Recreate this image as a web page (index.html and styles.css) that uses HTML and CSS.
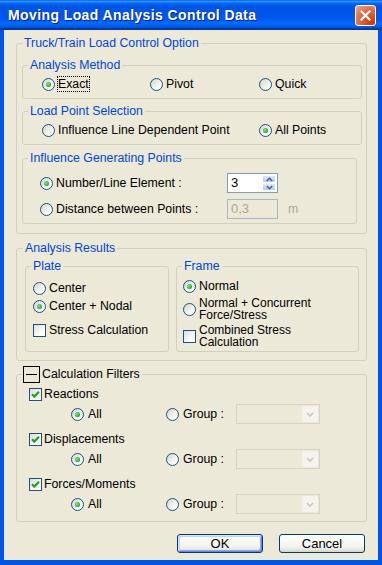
FILE: index.html
```html
<!DOCTYPE html>
<html lang="en">
<head>
  <meta charset="UTF-8" />
  <meta name="viewport" content="width=device-width, initial-scale=1.0"/>
  <title>Moving Load Analysis Control Data</title>
  <link rel="stylesheet" href="styles.css">
</head>
<body>

<div class="window">
  <div class="titlebar">
    <span class="title">Moving Load Analysis Control Data</span>
    <span class="close">
      <svg width="11" height="11" viewBox="0 0 11 11"><path d="M1.5 1.5 L9.5 9.5 M9.5 1.5 L1.5 9.5" stroke="#fff" stroke-width="2.2" stroke-linecap="square"/></svg>
    </span>
  </div>

  <div class="client">
    <fieldset class="group outer truck">
      <legend>Truck/Train Load Control Option</legend>

      <fieldset class="group inner method">
        <legend>Analysis Method</legend>
        <div class="row cols3">
          <div class="opt"><span class="radio on"></span><span class="focus">Exact</span></div>
          <div class="opt"><span class="radio"></span>Pivot</div>
          <div class="opt"><span class="radio"></span>Quick</div>
        </div>
      </fieldset>

      <fieldset class="group inner points">
        <legend>Load Point Selection</legend>
        <div class="row cols2">
          <div class="opt"><span class="radio"></span>Influence Line Dependent Point</div>
          <div class="opt"><span class="radio on"></span>All Points</div>
        </div>
      </fieldset>

      <fieldset class="group inner influence">
        <legend>Influence Generating Points</legend>
        <div class="field-row">
          <div class="opt"><span class="radio on"></span>Number/Line Element :</div>
          <div class="spin">
            <span class="spin-value">3</span>
            <span class="spin-btns">
              <span class="spin-btn"><svg width="7" height="5" viewBox="0 0 7 5"><path d="M0.8 4 L3.5 1.3 L6.2 4" fill="none" stroke="#4D6185" stroke-width="1.6"/></svg></span>
              <span class="spin-btn"><svg width="7" height="5" viewBox="0 0 7 5"><path d="M0.8 1 L3.5 3.7 L6.2 1" fill="none" stroke="#4D6185" stroke-width="1.6"/></svg></span>
            </span>
          </div>
        </div>
        <div class="field-row">
          <div class="opt"><span class="radio"></span>Distance between Points :</div>
          <div class="edit disabled">0,3</div>
          <span class="unit">m</span>
        </div>
      </fieldset>
    </fieldset>

    <fieldset class="group outer results">
      <legend>Analysis Results</legend>
      <div class="pair">
        <fieldset class="group sub plate">
          <legend>Plate</legend>
          <div class="item"><span class="radio"></span>Center</div>
          <div class="item"><span class="radio on"></span>Center + Nodal</div>
          <div class="item stress"><span class="check"></span>Stress Calculation</div>
        </fieldset>
        <fieldset class="group sub frame">
          <legend>Frame</legend>
          <div class="item"><span class="radio on"></span>Normal</div>
          <div class="item tall"><span class="radio"></span><span class="lines">Normal + Concurrent<br>Force/Stress</span></div>
          <div class="item tall combined"><span class="check"></span><span class="lines">Combined Stress<br>Calculation</span></div>
        </fieldset>
      </div>
    </fieldset>

    <fieldset class="group outer filters">
      <legend><span class="collapse"></span>Calculation Filters</legend>

      <div class="filter">
        <div class="check-row"><span class="check on"><svg width="11" height="11" viewBox="0 0 11 11"><path d="M2 5.2 L4.3 7.6 L9 2.8" fill="none" stroke="#21A121" stroke-width="2.2"/></svg></span>Reactions</div>
        <div class="sub-row">
          <div class="opt"><span class="radio on"></span>All</div>
          <div class="opt"><span class="radio"></span>Group :</div>
          <div class="combo"><span class="combo-btn"><svg width="8" height="5" viewBox="0 0 8 5"><path d="M1 1 L4 4 L7 1" fill="none" stroke="#C9C7BA" stroke-width="1.6"/></svg></span></div>
        </div>
      </div>

      <div class="filter">
        <div class="check-row"><span class="check on"><svg width="11" height="11" viewBox="0 0 11 11"><path d="M2 5.2 L4.3 7.6 L9 2.8" fill="none" stroke="#21A121" stroke-width="2.2"/></svg></span>Displacements</div>
        <div class="sub-row">
          <div class="opt"><span class="radio on"></span>All</div>
          <div class="opt"><span class="radio"></span>Group :</div>
          <div class="combo"><span class="combo-btn"><svg width="8" height="5" viewBox="0 0 8 5"><path d="M1 1 L4 4 L7 1" fill="none" stroke="#C9C7BA" stroke-width="1.6"/></svg></span></div>
        </div>
      </div>

      <div class="filter">
        <div class="check-row"><span class="check on"><svg width="11" height="11" viewBox="0 0 11 11"><path d="M2 5.2 L4.3 7.6 L9 2.8" fill="none" stroke="#21A121" stroke-width="2.2"/></svg></span>Forces/Moments</div>
        <div class="sub-row">
          <div class="opt"><span class="radio on"></span>All</div>
          <div class="opt"><span class="radio"></span>Group :</div>
          <div class="combo"><span class="combo-btn"><svg width="8" height="5" viewBox="0 0 8 5"><path d="M1 1 L4 4 L7 1" fill="none" stroke="#C9C7BA" stroke-width="1.6"/></svg></span></div>
        </div>
      </div>
    </fieldset>

    <div class="buttons">
      <button class="btn default">OK</button>
      <button class="btn">Cancel</button>
    </div>
  </div>
</div>

</body>
</html>
```

FILE: styles.css
```css
* {
  box-sizing: border-box;
}
body {
  margin: 0;
  font-family: "Liberation Sans", Arial, sans-serif;
  font-size: 12.3px;
  color: #000;
  background: #ECE9D8;
}
.window {
  width: 382px;
  height: 565px;
  display: flex;
  flex-direction: column;
}

/* title bar */
.titlebar {
  height: 30px;
  flex: none;
  display: flex;
  align-items: center;
  justify-content: space-between;
  padding: 0 6px 0 8px;
  background: linear-gradient(#0058EE 0%, #3593FF 4%, #288EFF 6%, #127DFF 8%, #036FFC 10%, #0262EE 14%, #0057E5 20%, #0054E3 24%, #0055EB 56%, #005BF5 66%, #026AFE 76%, #0062EF 86%, #0052D6 92%, #0040AB 94%, #003092 100%);
}
.title {
  color: #fff;
  font-weight: bold;
  font-size: 14px;
  letter-spacing: 0.4px;
  text-shadow: 1px 1px 0 #0A1E8C;
}
.close {
  width: 21px;
  height: 21px;
  border: 1px solid #fff;
  border-radius: 3px;
  display: flex;
  align-items: center;
  justify-content: center;
  background: radial-gradient(circle at 85% 90%, #C23D0F, #D9572A 35%, #E47550 65%, #EFA88C);
}

.client {
  flex: 1;
  border: solid #0055E5;
  border-width: 0 4px 5px;
  background: #ECE9D8;
  padding: 0 11px 0 12px;
}

/* group boxes */
.group {
  margin: 0;
  min-width: 0;
  border: 1px solid #D0D0BF;
  border-radius: 3px;
}
.group > legend {
  padding: 0 2px;
  line-height: 14px;
  color: #0046D5;
}
.outer {
  padding: 8px 4px 9px 5px;
}
.truck {
  margin-top: 6px;
}
.inner {
  padding: 4px 5px 6px 5px;
}
.points {
  margin-top: 5px;
}
.influence {
  margin-top: 6px;
  margin-right: 5px;
  padding-top: 8px;
  padding-bottom: 4px;
}

.row {
  height: 16px;
  display: grid;
  align-items: center;
  padding-left: 14px;
}
.cols3 {
  grid-template-columns: 108px 109px 1fr;
}
.cols2 {
  grid-template-columns: 217px 1fr;
}
.opt, .item, .check-row {
  display: flex;
  align-items: center;
  white-space: nowrap;
}

.radio {
  width: 13px;
  height: 13px;
  flex: none;
  margin-right: 3px;
  border: 1px solid #1C5180;
  border-radius: 50%;
  background: linear-gradient(135deg, #D4D3CB, #F4F4F0 60%, #fff);
  display: flex;
  align-items: center;
  justify-content: center;
}
.radio.on::after {
  content: "";
  width: 5px;
  height: 5px;
  border-radius: 50%;
  background: radial-gradient(circle at 40% 40%, #8DEA8D, #21A121 70%);
}
.check {
  width: 13px;
  height: 13px;
  flex: none;
  margin-right: 3px;
  border: 1px solid #1C5180;
  background: linear-gradient(135deg, #DCDCD7, #fff 75%);
  display: flex;
  align-items: center;
  justify-content: center;
}
.focus {
  outline: 1px dotted #000;
  line-height: 14px;
}

/* influence points */
.field-row {
  height: 20px;
  display: grid;
  grid-template-columns: 187px 51px auto;
  align-items: center;
  padding-left: 12px;
}
.field-row + .field-row {
  margin-top: 6px;
}
.spin {
  height: 20px;
  display: flex;
  border: 1px solid #7F9DB9;
  background: #fff;
}
.spin-value {
  flex: 1;
  padding-left: 3px;
  line-height: 17px;
  font-size: 13px;
}
.spin-btns {
  width: 14px;
  margin: 1px;
  display: flex;
  flex-direction: column;
}
.spin-btn {
  flex: 1;
  display: flex;
  align-items: center;
  justify-content: center;
  border-radius: 1px;
  background: linear-gradient(#DCE6FB, #B9CBF5);
  border: 1px solid #fff;
}
.edit {
  height: 20px;
  border: 1px solid #A7B6CB;
  padding-left: 3px;
  line-height: 18px;
  font-size: 13px;
}
.edit.disabled {
  color: #ACA899;
  background: #ECE9D8;
}
.unit {
  margin-left: 10px;
  color: #ACA899;
}

/* analysis results */
.results {
  margin-top: 7px;
  padding: 4px 5px 8px 6px;
}
.pair {
  display: grid;
  grid-template-columns: 144px 1fr;
  gap: 7px;
  margin: 0 2px;
}
.sub {
  padding: 6px 5px 2px 5px;
}
.plate .item {
  height: 18px;
  padding-left: 2px;
}
.plate .stress {
  margin-top: 6px;
}
.frame {
  padding-top: 4px;
  padding-bottom: 3px;
}
.frame .item {
  height: 18px;
  padding-left: 1px;
}
.frame .tall {
  height: 24px;
  margin-top: 2px;
}
.frame .combined {
  margin-top: 3px;
}
.lines {
  font-size: 12px;
  line-height: 12px;
}

/* calculation filters */
.filters {
  margin-top: 5px;
  padding: 3px 5px 7px 5px;
}
.filters > legend {
  display: flex;
  align-items: center;
  padding: 0 2px 0 1px;
  color: #000;
  line-height: 17px;
}
.collapse {
  width: 17px;
  height: 17px;
  margin-right: 2px;
  border: 1px solid #000;
  display: flex;
  align-items: center;
  justify-content: center;
}
.collapse::after {
  content: "";
  width: 11px;
  height: 1px;
  background: #000;
}
.filter + .filter {
  margin-top: 7px;
}
.check-row {
  height: 16px;
  padding-left: 7px;
}
.check-row .check {
  margin-right: 2px;
}
.sub-row {
  height: 20px;
  margin-top: 2px;
  display: grid;
  grid-template-columns: 95px 70px 84px;
  align-items: center;
  padding-left: 49px;
}
.sub-row .radio {
  margin-right: 4px;
}
.combo {
  height: 20px;
  border: 1px solid #D5D2C4;
  background: #ECE9D8;
  display: flex;
  justify-content: flex-end;
  padding: 1px;
}
.combo-btn {
  width: 16px;
  display: flex;
  align-items: center;
  justify-content: center;
  background: #F4F3EE;
  border-radius: 2px;
}

/* buttons */
.buttons {
  display: flex;
  justify-content: flex-end;
  gap: 16px;
  margin-top: 12px;
  padding-right: 2px;
}
.btn {
  width: 86px;
  height: 19px;
  padding: 0;
  font: inherit;
  font-size: 13px;
  color: #000;
  border: 1px solid #003C74;
  border-radius: 3px;
  background: linear-gradient(#FFFFFF, #F3F3EF 70%, #E3E0D6 90%, #D6D0C5);
}
.btn.default {
  box-shadow: inset 1px 1px 0 #CEE7FF, inset -1px -1px 0 #6982EE, inset 2px 2px 0 #BCD4F6, inset -2px -2px 0 #89ADE4;
}
```
